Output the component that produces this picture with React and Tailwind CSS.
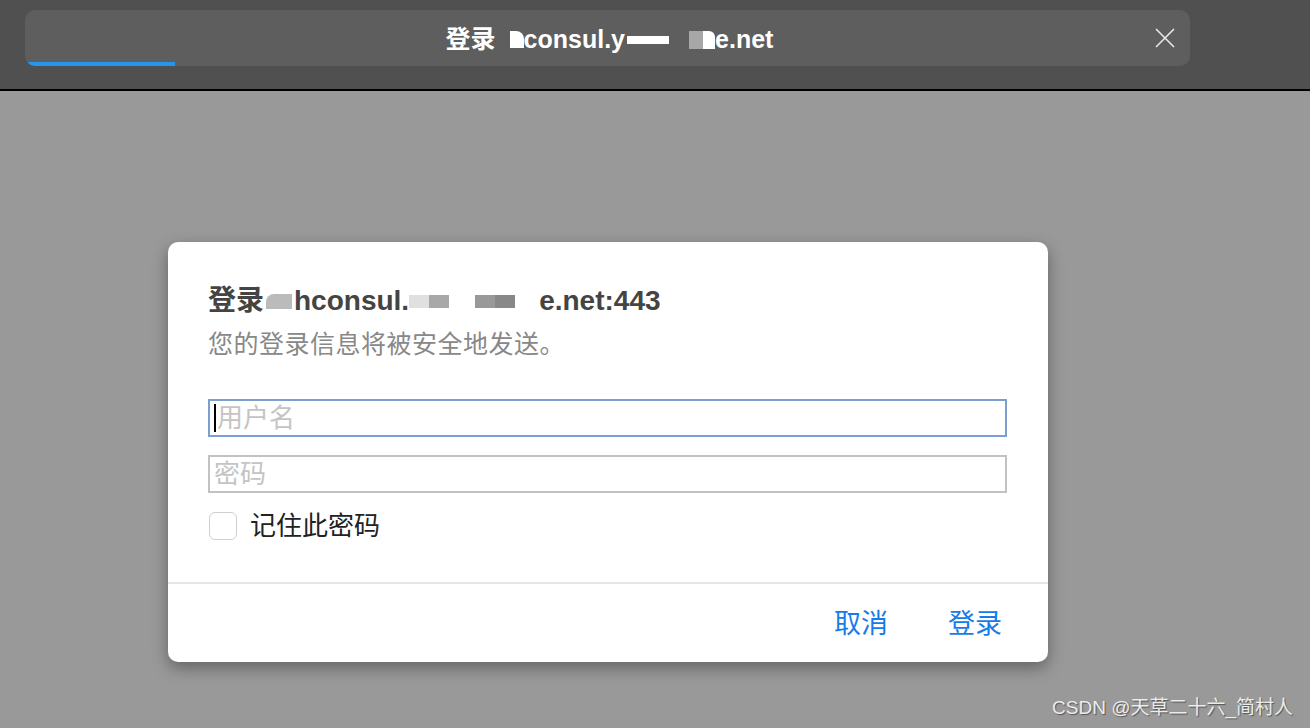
import React from "react";

const font = { fontFamily: '"Liberation Sans", "Noto Sans CJK SC", sans-serif' };

function TopBar() {
  return (
    <div className="h-[91px] bg-[#505050] border-b-2 border-black pt-[10px] pl-[25px] pr-[120px]">
      <div className="relative h-[56px] w-[1165px] rounded-[10px] bg-[#5e5e5e] flex items-center justify-center overflow-hidden">
        <div className="text-white text-[25px] font-semibold leading-none flex items-center pl-[4px] pt-[3px]">
          <span>登录</span>
          <span className="ml-[14px] inline-block w-[14px] h-[17px] bg-white rounded-tr-[8px]" />
          <span>consul.y</span>
          <span className="inline-block w-[42px] h-[8px] bg-white ml-[2px]" />
          <span className="inline-block w-[20px]" />
          <span className="inline-block w-[14px] h-[18px] bg-[#d9d9d9] opacity-60" />
          <span className="inline-block w-[12px] h-[18px] bg-white rounded-tr-[6px]" />
          <span>e.net</span>
        </div>
        <svg className="absolute right-[14px] top-[17px]" width="22" height="22" viewBox="0 0 22 22" fill="none" stroke="#e8e8e8" strokeWidth="1.6">
          <path d="M2 2 L20 20 M20 2 L2 20" />
        </svg>
        <div className="absolute left-[3px] bottom-0 h-[4px] w-[147px] bg-[#2196f3] rounded-bl-[10px]" />
      </div>
    </div>
  );
}

function Dialog() {
  return (
    <div className="w-[880px] h-[420px] bg-white rounded-[10px] shadow-[0_6px_16px_rgba(0,0,0,0.35)] flex flex-col">
      <div className="pl-[40px] pr-[41px] pt-[43px] flex-1">
        <div className="text-[28px] leading-[32px] font-semibold text-[#444] flex items-center">
          <span>登录</span>
          <span className="inline-block ml-[2px] w-[26px] h-[15px] bg-[#aaa] rounded-tl-[8px] opacity-80" />
          <span className="ml-[2px]">hconsul.</span>
          <span className="inline-block w-[20px] h-[13px] bg-[#e0e0e0]" />
          <span className="inline-block w-[20px] h-[13px] bg-[#a8a8a8]" />
          <span className="inline-block w-[26px]" />
          <span className="inline-block w-[20px] h-[13px] bg-[#999]" />
          <span className="inline-block w-[20px] h-[13px] bg-[#888]" />
          <span className="inline-block w-[24px]" />
          <span>e.net:443</span>
        </div>
        <div className="mt-[12px] text-[25px] leading-[30px] tracking-[0.5px] text-[#888]">您的登录信息将被安全地发送。</div>
        <div className="mt-[40px] h-[38px] border-2 border-[#7c9fcf] flex items-center pl-[4px] text-[26px] text-[#c4c4c4]">
          <span className="inline-block w-[2px] h-[28px] bg-black mr-[1px]" />
          用户名
        </div>
        <div className="mt-[18px] h-[38px] border-2 border-[#c2c2c2] flex items-center pl-[4px] text-[26px] text-[#c4c4c4]">
          密码
        </div>
        <div className="mt-[19px] flex items-center gap-[13px]">
          <div className="w-[28px] h-[28px] ml-[1px] border border-[#cfcfcf] rounded-[6px] bg-white" />
          <span className="text-[26px] leading-[28px] text-[#222]">记住此密码</span>
        </div>
      </div>
      <div className="h-[80px] border-t-2 border-[#e6e6e6] flex items-center justify-end pr-[46px] pt-[3px] gap-[60px] text-[27px] text-[#167ce9]">
        <span>取消</span>
        <span>登录</span>
      </div>
    </div>
  );
}

export default function App() {
  return (
    <div className="relative w-[1310px] h-[728px] bg-[#999999] overflow-hidden" style={font}>
      <TopBar />
      <div className="pl-[168px] pt-[151px]">
        <Dialog />
      </div>
      <div className="absolute right-[17px] bottom-[8px] text-[19px] leading-[24px] text-[#ececec] [text-shadow:1px_1px_1px_rgba(0,0,0,0.45)]">
        CSDN @天草二十六_简村人
      </div>
    </div>
  );
}
